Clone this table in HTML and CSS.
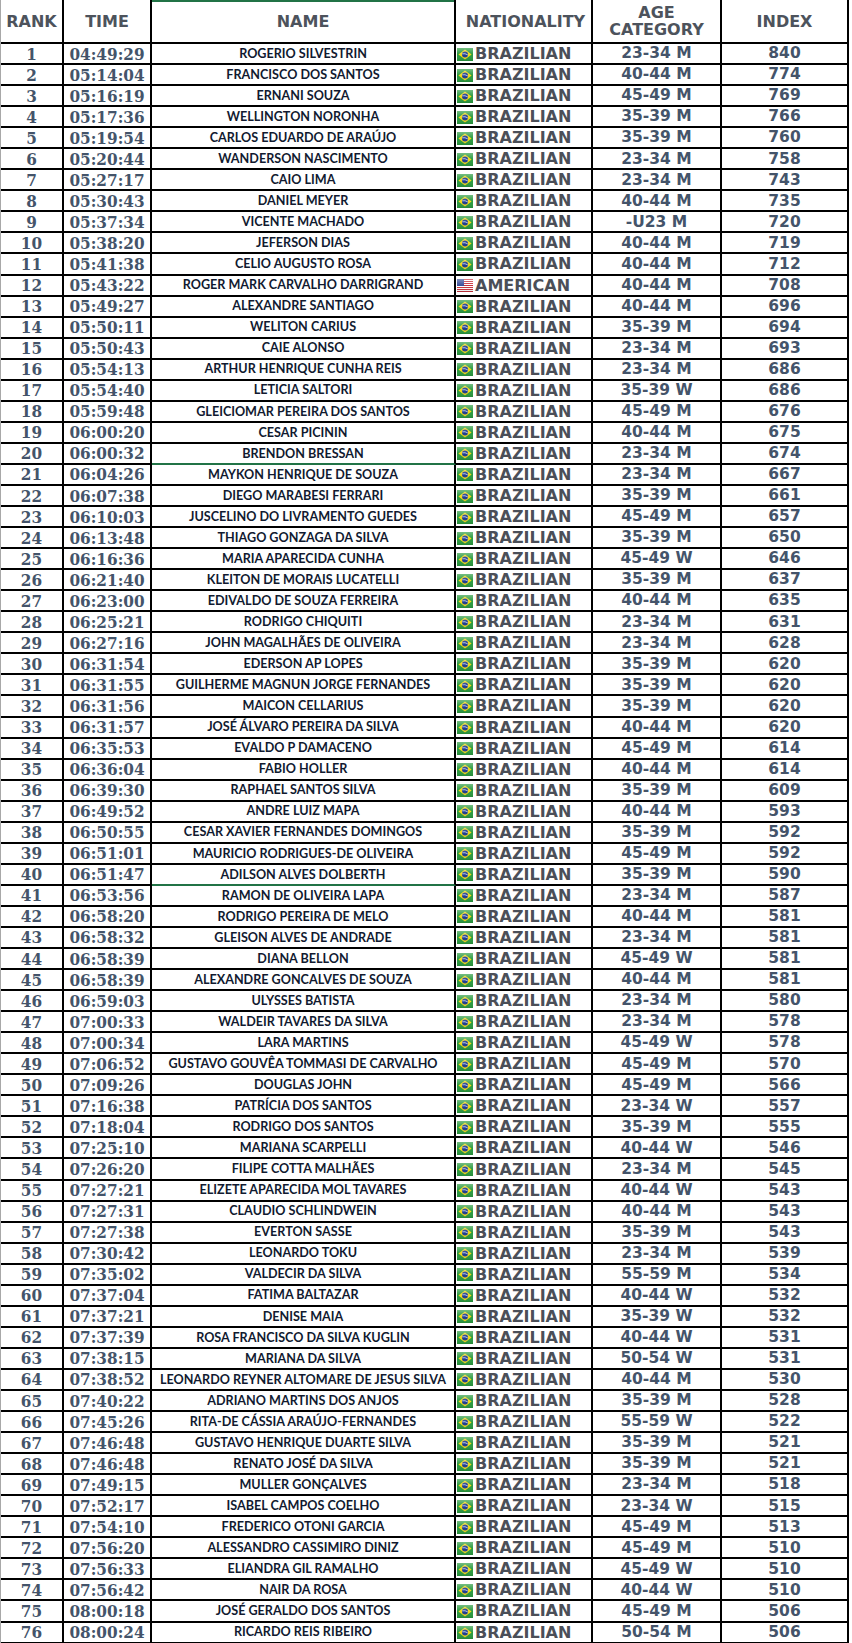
FILE: index.html
```html
<!DOCTYPE html>
<html lang="pt">
<head>
<meta charset="utf-8">
<title>Classificação</title>
<link rel="stylesheet" href="styles.css">
</head>
<body>
<svg class="defs" width="0" height="0" aria-hidden="true">
  <defs>
    <linearGradient id="gloss" x1="0" y1="0" x2="0" y2="1">
      <stop offset="0" stop-color="#fff" stop-opacity="0.35"/>
      <stop offset="0.5" stop-color="#fff" stop-opacity="0"/>
      <stop offset="1" stop-color="#000" stop-opacity="0.12"/>
    </linearGradient>
    <symbol id="br" viewBox="0 0 16 13">
      <rect x="0" y="0" width="16" height="13" fill="#2a9a3f"/>
      <polygon points="8,1.4 14.6,6.5 8,11.6 1.4,6.5" fill="#f3d81a"/>
      <circle cx="8" cy="6.5" r="3" fill="#1d3c8f"/>
      <path d="M5.2 5.9 Q8 5.1 10.8 6.9" stroke="#fff" stroke-width="0.7" fill="none"/>
      <rect x="0" y="0" width="16" height="13" fill="url(#gloss)"/>
    </symbol>
    <symbol id="us" viewBox="0 0 16 13">
      <rect x="0" y="0" width="16" height="13" fill="#fff"/>
      <rect x="0" y="0" width="16" height="1" fill="#c8323c"/>
      <rect x="0" y="2" width="16" height="1" fill="#c8323c"/>
      <rect x="0" y="4" width="16" height="1" fill="#c8323c"/>
      <rect x="0" y="6" width="16" height="1" fill="#c8323c"/>
      <rect x="0" y="8" width="16" height="1" fill="#c8323c"/>
      <rect x="0" y="10" width="16" height="1" fill="#c8323c"/>
      <rect x="0" y="12" width="16" height="1" fill="#c8323c"/>
      <rect x="0" y="0" width="7" height="7" fill="#3b4f9a"/>
      <rect x="0" y="0" width="16" height="13" fill="url(#gloss)"/>
    </symbol>
  </defs>
</svg>

<div class="sheet">
  <div class="row head">
    <div class="c rank">RANK</div>
    <div class="c time">TIME</div>
    <div class="c name">NAME</div>
    <div class="c nat">NATIONALITY</div>
    <div class="c age">AGE<br>CATEGORY</div>
    <div class="c idx">INDEX</div>
  </div>

  <div class="row"><div class="c rank">1</div><div class="c time">04:49:29</div><div class="c name">ROGERIO SILVESTRIN</div><div class="c nat"><svg class="flag"><use href="#br"/></svg>BRAZILIAN</div><div class="c age">23-34 M</div><div class="c idx">840</div></div>
  <div class="row"><div class="c rank">2</div><div class="c time">05:14:04</div><div class="c name">FRANCISCO DOS SANTOS</div><div class="c nat"><svg class="flag"><use href="#br"/></svg>BRAZILIAN</div><div class="c age">40-44 M</div><div class="c idx">774</div></div>
  <div class="row"><div class="c rank">3</div><div class="c time">05:16:19</div><div class="c name">ERNANI SOUZA</div><div class="c nat"><svg class="flag"><use href="#br"/></svg>BRAZILIAN</div><div class="c age">45-49 M</div><div class="c idx">769</div></div>
  <div class="row"><div class="c rank">4</div><div class="c time">05:17:36</div><div class="c name">WELLINGTON NORONHA</div><div class="c nat"><svg class="flag"><use href="#br"/></svg>BRAZILIAN</div><div class="c age">35-39 M</div><div class="c idx">766</div></div>
  <div class="row"><div class="c rank">5</div><div class="c time">05:19:54</div><div class="c name">CARLOS EDUARDO DE ARAÚJO</div><div class="c nat"><svg class="flag"><use href="#br"/></svg>BRAZILIAN</div><div class="c age">35-39 M</div><div class="c idx">760</div></div>
  <div class="row"><div class="c rank">6</div><div class="c time">05:20:44</div><div class="c name">WANDERSON NASCIMENTO</div><div class="c nat"><svg class="flag"><use href="#br"/></svg>BRAZILIAN</div><div class="c age">23-34 M</div><div class="c idx">758</div></div>
  <div class="row"><div class="c rank">7</div><div class="c time">05:27:17</div><div class="c name">CAIO LIMA</div><div class="c nat"><svg class="flag"><use href="#br"/></svg>BRAZILIAN</div><div class="c age">23-34 M</div><div class="c idx">743</div></div>
  <div class="row"><div class="c rank">8</div><div class="c time">05:30:43</div><div class="c name">DANIEL MEYER</div><div class="c nat"><svg class="flag"><use href="#br"/></svg>BRAZILIAN</div><div class="c age">40-44 M</div><div class="c idx">735</div></div>
  <div class="row"><div class="c rank">9</div><div class="c time">05:37:34</div><div class="c name">VICENTE MACHADO</div><div class="c nat"><svg class="flag"><use href="#br"/></svg>BRAZILIAN</div><div class="c age">-U23 M</div><div class="c idx">720</div></div>
  <div class="row"><div class="c rank">10</div><div class="c time">05:38:20</div><div class="c name">JEFERSON DIAS</div><div class="c nat"><svg class="flag"><use href="#br"/></svg>BRAZILIAN</div><div class="c age">40-44 M</div><div class="c idx">719</div></div>
  <div class="row"><div class="c rank">11</div><div class="c time">05:41:38</div><div class="c name">CELIO AUGUSTO ROSA</div><div class="c nat"><svg class="flag"><use href="#br"/></svg>BRAZILIAN</div><div class="c age">40-44 M</div><div class="c idx">712</div></div>
  <div class="row"><div class="c rank">12</div><div class="c time">05:43:22</div><div class="c name">ROGER MARK CARVALHO DARRIGRAND</div><div class="c nat"><svg class="flag"><use href="#us"/></svg>AMERICAN</div><div class="c age">40-44 M</div><div class="c idx">708</div></div>
  <div class="row"><div class="c rank">13</div><div class="c time">05:49:27</div><div class="c name">ALEXANDRE SANTIAGO</div><div class="c nat"><svg class="flag"><use href="#br"/></svg>BRAZILIAN</div><div class="c age">40-44 M</div><div class="c idx">696</div></div>
  <div class="row"><div class="c rank">14</div><div class="c time">05:50:11</div><div class="c name">WELITON CARIUS</div><div class="c nat"><svg class="flag"><use href="#br"/></svg>BRAZILIAN</div><div class="c age">35-39 M</div><div class="c idx">694</div></div>
  <div class="row"><div class="c rank">15</div><div class="c time">05:50:43</div><div class="c name">CAIE ALONSO</div><div class="c nat"><svg class="flag"><use href="#br"/></svg>BRAZILIAN</div><div class="c age">23-34 M</div><div class="c idx">693</div></div>
  <div class="row"><div class="c rank">16</div><div class="c time">05:54:13</div><div class="c name">ARTHUR HENRIQUE CUNHA REIS</div><div class="c nat"><svg class="flag"><use href="#br"/></svg>BRAZILIAN</div><div class="c age">23-34 M</div><div class="c idx">686</div></div>
  <div class="row"><div class="c rank">17</div><div class="c time">05:54:40</div><div class="c name">LETICIA SALTORI</div><div class="c nat"><svg class="flag"><use href="#br"/></svg>BRAZILIAN</div><div class="c age">35-39 W</div><div class="c idx">686</div></div>
  <div class="row"><div class="c rank">18</div><div class="c time">05:59:48</div><div class="c name">GLEICIOMAR PEREIRA DOS SANTOS</div><div class="c nat"><svg class="flag"><use href="#br"/></svg>BRAZILIAN</div><div class="c age">45-49 M</div><div class="c idx">676</div></div>
  <div class="row"><div class="c rank">19</div><div class="c time">06:00:20</div><div class="c name">CESAR PICININ</div><div class="c nat"><svg class="flag"><use href="#br"/></svg>BRAZILIAN</div><div class="c age">40-44 M</div><div class="c idx">675</div></div>
  <div class="row brk"><div class="c rank">20</div><div class="c time">06:00:32</div><div class="c name">BRENDON BRESSAN</div><div class="c nat"><svg class="flag"><use href="#br"/></svg>BRAZILIAN</div><div class="c age">23-34 M</div><div class="c idx">674</div></div>
  <div class="row"><div class="c rank">21</div><div class="c time">06:04:26</div><div class="c name">MAYKON HENRIQUE DE SOUZA</div><div class="c nat"><svg class="flag"><use href="#br"/></svg>BRAZILIAN</div><div class="c age">23-34 M</div><div class="c idx">667</div></div>
  <div class="row"><div class="c rank">22</div><div class="c time">06:07:38</div><div class="c name">DIEGO MARABESI FERRARI</div><div class="c nat"><svg class="flag"><use href="#br"/></svg>BRAZILIAN</div><div class="c age">35-39 M</div><div class="c idx">661</div></div>
  <div class="row"><div class="c rank">23</div><div class="c time">06:10:03</div><div class="c name">JUSCELINO DO LIVRAMENTO GUEDES</div><div class="c nat"><svg class="flag"><use href="#br"/></svg>BRAZILIAN</div><div class="c age">45-49 M</div><div class="c idx">657</div></div>
  <div class="row"><div class="c rank">24</div><div class="c time">06:13:48</div><div class="c name">THIAGO GONZAGA DA SILVA</div><div class="c nat"><svg class="flag"><use href="#br"/></svg>BRAZILIAN</div><div class="c age">35-39 M</div><div class="c idx">650</div></div>
  <div class="row"><div class="c rank">25</div><div class="c time">06:16:36</div><div class="c name">MARIA APARECIDA CUNHA</div><div class="c nat"><svg class="flag"><use href="#br"/></svg>BRAZILIAN</div><div class="c age">45-49 W</div><div class="c idx">646</div></div>
  <div class="row"><div class="c rank">26</div><div class="c time">06:21:40</div><div class="c name">KLEITON DE MORAIS LUCATELLI</div><div class="c nat"><svg class="flag"><use href="#br"/></svg>BRAZILIAN</div><div class="c age">35-39 M</div><div class="c idx">637</div></div>
  <div class="row"><div class="c rank">27</div><div class="c time">06:23:00</div><div class="c name">EDIVALDO DE SOUZA FERREIRA</div><div class="c nat"><svg class="flag"><use href="#br"/></svg>BRAZILIAN</div><div class="c age">40-44 M</div><div class="c idx">635</div></div>
  <div class="row"><div class="c rank">28</div><div class="c time">06:25:21</div><div class="c name">RODRIGO CHIQUITI</div><div class="c nat"><svg class="flag"><use href="#br"/></svg>BRAZILIAN</div><div class="c age">23-34 M</div><div class="c idx">631</div></div>
  <div class="row"><div class="c rank">29</div><div class="c time">06:27:16</div><div class="c name">JOHN MAGALHÃES DE OLIVEIRA</div><div class="c nat"><svg class="flag"><use href="#br"/></svg>BRAZILIAN</div><div class="c age">23-34 M</div><div class="c idx">628</div></div>
  <div class="row"><div class="c rank">30</div><div class="c time">06:31:54</div><div class="c name">EDERSON AP LOPES</div><div class="c nat"><svg class="flag"><use href="#br"/></svg>BRAZILIAN</div><div class="c age">35-39 M</div><div class="c idx">620</div></div>
  <div class="row"><div class="c rank">31</div><div class="c time">06:31:55</div><div class="c name">GUILHERME MAGNUN JORGE FERNANDES</div><div class="c nat"><svg class="flag"><use href="#br"/></svg>BRAZILIAN</div><div class="c age">35-39 M</div><div class="c idx">620</div></div>
  <div class="row"><div class="c rank">32</div><div class="c time">06:31:56</div><div class="c name">MAICON CELLARIUS</div><div class="c nat"><svg class="flag"><use href="#br"/></svg>BRAZILIAN</div><div class="c age">35-39 M</div><div class="c idx">620</div></div>
  <div class="row"><div class="c rank">33</div><div class="c time">06:31:57</div><div class="c name">JOSÉ ÁLVARO PEREIRA DA SILVA</div><div class="c nat"><svg class="flag"><use href="#br"/></svg>BRAZILIAN</div><div class="c age">40-44 M</div><div class="c idx">620</div></div>
  <div class="row"><div class="c rank">34</div><div class="c time">06:35:53</div><div class="c name">EVALDO P DAMACENO</div><div class="c nat"><svg class="flag"><use href="#br"/></svg>BRAZILIAN</div><div class="c age">45-49 M</div><div class="c idx">614</div></div>
  <div class="row"><div class="c rank">35</div><div class="c time">06:36:04</div><div class="c name">FABIO HOLLER</div><div class="c nat"><svg class="flag"><use href="#br"/></svg>BRAZILIAN</div><div class="c age">40-44 M</div><div class="c idx">614</div></div>
  <div class="row"><div class="c rank">36</div><div class="c time">06:39:30</div><div class="c name">RAPHAEL SANTOS SILVA</div><div class="c nat"><svg class="flag"><use href="#br"/></svg>BRAZILIAN</div><div class="c age">35-39 M</div><div class="c idx">609</div></div>
  <div class="row"><div class="c rank">37</div><div class="c time">06:49:52</div><div class="c name">ANDRE LUIZ MAPA</div><div class="c nat"><svg class="flag"><use href="#br"/></svg>BRAZILIAN</div><div class="c age">40-44 M</div><div class="c idx">593</div></div>
  <div class="row"><div class="c rank">38</div><div class="c time">06:50:55</div><div class="c name">CESAR XAVIER FERNANDES DOMINGOS</div><div class="c nat"><svg class="flag"><use href="#br"/></svg>BRAZILIAN</div><div class="c age">35-39 M</div><div class="c idx">592</div></div>
  <div class="row"><div class="c rank">39</div><div class="c time">06:51:01</div><div class="c name">MAURICIO RODRIGUES-DE OLIVEIRA</div><div class="c nat"><svg class="flag"><use href="#br"/></svg>BRAZILIAN</div><div class="c age">45-49 M</div><div class="c idx">592</div></div>
  <div class="row brk"><div class="c rank">40</div><div class="c time">06:51:47</div><div class="c name">ADILSON ALVES DOLBERTH</div><div class="c nat"><svg class="flag"><use href="#br"/></svg>BRAZILIAN</div><div class="c age">35-39 M</div><div class="c idx">590</div></div>
  <div class="row"><div class="c rank">41</div><div class="c time">06:53:56</div><div class="c name">RAMON DE OLIVEIRA LAPA</div><div class="c nat"><svg class="flag"><use href="#br"/></svg>BRAZILIAN</div><div class="c age">23-34 M</div><div class="c idx">587</div></div>
  <div class="row"><div class="c rank">42</div><div class="c time">06:58:20</div><div class="c name">RODRIGO PEREIRA DE MELO</div><div class="c nat"><svg class="flag"><use href="#br"/></svg>BRAZILIAN</div><div class="c age">40-44 M</div><div class="c idx">581</div></div>
  <div class="row"><div class="c rank">43</div><div class="c time">06:58:32</div><div class="c name">GLEISON ALVES DE ANDRADE</div><div class="c nat"><svg class="flag"><use href="#br"/></svg>BRAZILIAN</div><div class="c age">23-34 M</div><div class="c idx">581</div></div>
  <div class="row"><div class="c rank">44</div><div class="c time">06:58:39</div><div class="c name">DIANA BELLON</div><div class="c nat"><svg class="flag"><use href="#br"/></svg>BRAZILIAN</div><div class="c age">45-49 W</div><div class="c idx">581</div></div>
  <div class="row"><div class="c rank">45</div><div class="c time">06:58:39</div><div class="c name">ALEXANDRE GONCALVES DE SOUZA</div><div class="c nat"><svg class="flag"><use href="#br"/></svg>BRAZILIAN</div><div class="c age">40-44 M</div><div class="c idx">581</div></div>
  <div class="row"><div class="c rank">46</div><div class="c time">06:59:03</div><div class="c name">ULYSSES BATISTA</div><div class="c nat"><svg class="flag"><use href="#br"/></svg>BRAZILIAN</div><div class="c age">23-34 M</div><div class="c idx">580</div></div>
  <div class="row"><div class="c rank">47</div><div class="c time">07:00:33</div><div class="c name">WALDEIR TAVARES DA SILVA</div><div class="c nat"><svg class="flag"><use href="#br"/></svg>BRAZILIAN</div><div class="c age">23-34 M</div><div class="c idx">578</div></div>
  <div class="row"><div class="c rank">48</div><div class="c time">07:00:34</div><div class="c name">LARA MARTINS</div><div class="c nat"><svg class="flag"><use href="#br"/></svg>BRAZILIAN</div><div class="c age">45-49 W</div><div class="c idx">578</div></div>
  <div class="row"><div class="c rank">49</div><div class="c time">07:06:52</div><div class="c name">GUSTAVO GOUVÊA TOMMASI DE CARVALHO</div><div class="c nat"><svg class="flag"><use href="#br"/></svg>BRAZILIAN</div><div class="c age">45-49 M</div><div class="c idx">570</div></div>
  <div class="row"><div class="c rank">50</div><div class="c time">07:09:26</div><div class="c name">DOUGLAS JOHN</div><div class="c nat"><svg class="flag"><use href="#br"/></svg>BRAZILIAN</div><div class="c age">45-49 M</div><div class="c idx">566</div></div>
  <div class="row"><div class="c rank">51</div><div class="c time">07:16:38</div><div class="c name">PATRÍCIA DOS SANTOS</div><div class="c nat"><svg class="flag"><use href="#br"/></svg>BRAZILIAN</div><div class="c age">23-34 W</div><div class="c idx">557</div></div>
  <div class="row"><div class="c rank">52</div><div class="c time">07:18:04</div><div class="c name">RODRIGO DOS SANTOS</div><div class="c nat"><svg class="flag"><use href="#br"/></svg>BRAZILIAN</div><div class="c age">35-39 M</div><div class="c idx">555</div></div>
  <div class="row"><div class="c rank">53</div><div class="c time">07:25:10</div><div class="c name">MARIANA SCARPELLI</div><div class="c nat"><svg class="flag"><use href="#br"/></svg>BRAZILIAN</div><div class="c age">40-44 W</div><div class="c idx">546</div></div>
  <div class="row"><div class="c rank">54</div><div class="c time">07:26:20</div><div class="c name">FILIPE COTTA MALHÃES</div><div class="c nat"><svg class="flag"><use href="#br"/></svg>BRAZILIAN</div><div class="c age">23-34 M</div><div class="c idx">545</div></div>
  <div class="row"><div class="c rank">55</div><div class="c time">07:27:21</div><div class="c name">ELIZETE APARECIDA MOL TAVARES</div><div class="c nat"><svg class="flag"><use href="#br"/></svg>BRAZILIAN</div><div class="c age">40-44 W</div><div class="c idx">543</div></div>
  <div class="row"><div class="c rank">56</div><div class="c time">07:27:31</div><div class="c name">CLAUDIO SCHLINDWEIN</div><div class="c nat"><svg class="flag"><use href="#br"/></svg>BRAZILIAN</div><div class="c age">40-44 M</div><div class="c idx">543</div></div>
  <div class="row"><div class="c rank">57</div><div class="c time">07:27:38</div><div class="c name">EVERTON SASSE</div><div class="c nat"><svg class="flag"><use href="#br"/></svg>BRAZILIAN</div><div class="c age">35-39 M</div><div class="c idx">543</div></div>
  <div class="row"><div class="c rank">58</div><div class="c time">07:30:42</div><div class="c name">LEONARDO TOKU</div><div class="c nat"><svg class="flag"><use href="#br"/></svg>BRAZILIAN</div><div class="c age">23-34 M</div><div class="c idx">539</div></div>
  <div class="row"><div class="c rank">59</div><div class="c time">07:35:02</div><div class="c name">VALDECIR DA SILVA</div><div class="c nat"><svg class="flag"><use href="#br"/></svg>BRAZILIAN</div><div class="c age">55-59 M</div><div class="c idx">534</div></div>
  <div class="row"><div class="c rank">60</div><div class="c time">07:37:04</div><div class="c name">FATIMA BALTAZAR</div><div class="c nat"><svg class="flag"><use href="#br"/></svg>BRAZILIAN</div><div class="c age">40-44 W</div><div class="c idx">532</div></div>
  <div class="row"><div class="c rank">61</div><div class="c time">07:37:21</div><div class="c name">DENISE MAIA</div><div class="c nat"><svg class="flag"><use href="#br"/></svg>BRAZILIAN</div><div class="c age">35-39 W</div><div class="c idx">532</div></div>
  <div class="row"><div class="c rank">62</div><div class="c time">07:37:39</div><div class="c name">ROSA FRANCISCO DA SILVA KUGLIN</div><div class="c nat"><svg class="flag"><use href="#br"/></svg>BRAZILIAN</div><div class="c age">40-44 W</div><div class="c idx">531</div></div>
  <div class="row"><div class="c rank">63</div><div class="c time">07:38:15</div><div class="c name">MARIANA DA SILVA</div><div class="c nat"><svg class="flag"><use href="#br"/></svg>BRAZILIAN</div><div class="c age">50-54 W</div><div class="c idx">531</div></div>
  <div class="row"><div class="c rank">64</div><div class="c time">07:38:52</div><div class="c name">LEONARDO REYNER ALTOMARE DE JESUS SILVA</div><div class="c nat"><svg class="flag"><use href="#br"/></svg>BRAZILIAN</div><div class="c age">40-44 M</div><div class="c idx">530</div></div>
  <div class="row"><div class="c rank">65</div><div class="c time">07:40:22</div><div class="c name">ADRIANO MARTINS DOS ANJOS</div><div class="c nat"><svg class="flag"><use href="#br"/></svg>BRAZILIAN</div><div class="c age">35-39 M</div><div class="c idx">528</div></div>
  <div class="row"><div class="c rank">66</div><div class="c time">07:45:26</div><div class="c name">RITA-DE CÁSSIA ARAÚJO-FERNANDES</div><div class="c nat"><svg class="flag"><use href="#br"/></svg>BRAZILIAN</div><div class="c age">55-59 W</div><div class="c idx">522</div></div>
  <div class="row"><div class="c rank">67</div><div class="c time">07:46:48</div><div class="c name">GUSTAVO HENRIQUE DUARTE SILVA</div><div class="c nat"><svg class="flag"><use href="#br"/></svg>BRAZILIAN</div><div class="c age">35-39 M</div><div class="c idx">521</div></div>
  <div class="row"><div class="c rank">68</div><div class="c time">07:46:48</div><div class="c name">RENATO JOSÉ DA SILVA</div><div class="c nat"><svg class="flag"><use href="#br"/></svg>BRAZILIAN</div><div class="c age">35-39 M</div><div class="c idx">521</div></div>
  <div class="row"><div class="c rank">69</div><div class="c time">07:49:15</div><div class="c name">MULLER GONÇALVES</div><div class="c nat"><svg class="flag"><use href="#br"/></svg>BRAZILIAN</div><div class="c age">23-34 M</div><div class="c idx">518</div></div>
  <div class="row"><div class="c rank">70</div><div class="c time">07:52:17</div><div class="c name">ISABEL CAMPOS COELHO</div><div class="c nat"><svg class="flag"><use href="#br"/></svg>BRAZILIAN</div><div class="c age">23-34 W</div><div class="c idx">515</div></div>
  <div class="row"><div class="c rank">71</div><div class="c time">07:54:10</div><div class="c name">FREDERICO OTONI GARCIA</div><div class="c nat"><svg class="flag"><use href="#br"/></svg>BRAZILIAN</div><div class="c age">45-49 M</div><div class="c idx">513</div></div>
  <div class="row"><div class="c rank">72</div><div class="c time">07:56:20</div><div class="c name">ALESSANDRO CASSIMIRO DINIZ</div><div class="c nat"><svg class="flag"><use href="#br"/></svg>BRAZILIAN</div><div class="c age">45-49 M</div><div class="c idx">510</div></div>
  <div class="row"><div class="c rank">73</div><div class="c time">07:56:33</div><div class="c name">ELIANDRA GIL RAMALHO</div><div class="c nat"><svg class="flag"><use href="#br"/></svg>BRAZILIAN</div><div class="c age">45-49 W</div><div class="c idx">510</div></div>
  <div class="row"><div class="c rank">74</div><div class="c time">07:56:42</div><div class="c name">NAIR DA ROSA</div><div class="c nat"><svg class="flag"><use href="#br"/></svg>BRAZILIAN</div><div class="c age">40-44 W</div><div class="c idx">510</div></div>
  <div class="row"><div class="c rank">75</div><div class="c time">08:00:18</div><div class="c name">JOSÉ GERALDO DOS SANTOS</div><div class="c nat"><svg class="flag"><use href="#br"/></svg>BRAZILIAN</div><div class="c age">45-49 M</div><div class="c idx">506</div></div>
  <div class="row"><div class="c rank">76</div><div class="c time">08:00:24</div><div class="c name">RICARDO REIS RIBEIRO</div><div class="c nat"><svg class="flag"><use href="#br"/></svg>BRAZILIAN</div><div class="c age">50-54 M</div><div class="c idx">506</div></div>
</div>
<div class="tabs"></div>
</body>
</html>
```

FILE: styles.css
```css
html, body {
  margin: 0;
  padding: 0;
  background: #fff;
}

.defs {
  position: absolute;
  width: 0;
  height: 0;
  overflow: hidden;
}

.sheet {
  width: 849px;
  border-left: 1px solid #a8a8a8;
  box-sizing: border-box;
  display: flex;
  flex-direction: column;
}

.row {
  display: grid;
  grid-template-columns: 63px 88px 304px 137px 129px 127px;
  height: 21.05px;
  margin-left: -1px;
  padding-left: 1px;
}

.row.head {
  height: 44px;
}

.c {
  box-sizing: border-box;
  border-right: 2px solid #000;
  border-bottom: 2px solid #000;
  display: flex;
  align-items: center;
  justify-content: center;
  white-space: nowrap;
  overflow: hidden;
  color: #44546a;
  font-family: "DejaVu Sans", Verdana, sans-serif;
  font-weight: bold;
  font-size: 15.5px;
  line-height: 1;
  padding-top: 1px;
}

.rank, .time {
  font-family: "DejaVu Serif Condensed", "DejaVu Serif", serif;
  font-size: 17px;
  font-stretch: condensed;
}

.name {
  font-family: Lato, "Open Sans", sans-serif;
  font-size: 12.6px;
  color: #111a30;
}

.nat {
  justify-content: flex-start;
  padding-left: 1px;
  color: #4b4f58;
  font-size: 16px;
}

.flag {
  width: 16px;
  height: 13px;
  margin-right: 2px;
  flex: none;
}

.head .c {
  font-family: "DejaVu Sans", Verdana, sans-serif;
  font-size: 16px;
  color: #4d535c;
  font-stretch: normal;
  text-align: center;
  line-height: 17px;
  padding-top: 0;
}

.head .nat {
  justify-content: center;
  padding-left: 4px;
}

.head .name {
  box-shadow: inset 0 2px 0 #217346;
}

.brk .name {
  border-bottom-color: #217346;
}

.tabs {
  height: 2px;
  background: #e6e6e6;
}
```
